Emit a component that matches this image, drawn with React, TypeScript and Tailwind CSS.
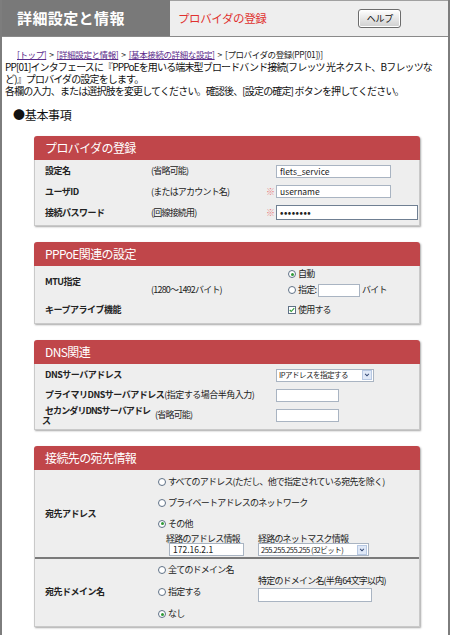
import type { ReactNode } from 'react';

const jp = "font-['Noto_Sans_CJK_JP','Noto_Sans',sans-serif]";

function Radio({ checked = false }: { checked?: boolean }) {
  return (
    <span className="inline-flex h-[8px] w-[8px] shrink-0 items-center justify-center rounded-full border border-[#5f7186] bg-white">
      {checked && <span className="h-[3px] w-[3px] rounded-full bg-[#2e9a36]" />}
    </span>
  );
}

function Check() {
  return (
    <span className="inline-flex h-[8px] w-[8px] shrink-0 items-center justify-center border border-[#5f7186] bg-white">
      <svg viewBox="0 0 8 8" className="h-[6px] w-[6px]">
        <path d="M1 4 L3 6 L7 1.5" fill="none" stroke="#2e9a36" strokeWidth="1.5" />
      </svg>
    </span>
  );
}

function Field({
  value = '',
  w,
  h = 'h-[13px]',
  strong = false,
  dots = false,
}: {
  value?: string;
  w: string;
  h?: string;
  strong?: boolean;
  dots?: boolean;
}) {
  return (
    <div
      className={`${w} ${h} flex items-center border bg-white px-[3px] leading-none text-[#222] ${
        strong ? 'border-[#6f7f92]' : 'border-[#a9b4c2]'
      } ${dots ? 'text-[9px] font-bold tracking-[0.5px]' : 'text-[8.5px]'}`}
    >
      {value}
    </div>
  );
}

function Select({ value, w }: { value: string; w: string }) {
  return (
    <div className={`${w} flex h-[13px] items-center border border-[#a9b4c2] bg-white`}>
      <span className="flex-1 whitespace-nowrap pl-[2px] text-[7.5px] leading-none tracking-[-0.5px] text-[#222]">
        {value}
      </span>
      <span className="mr-px flex h-[10px] w-[10px] shrink-0 items-center justify-center border border-[#b7c8e2] bg-[#dfe8f7]">
        <svg viewBox="0 0 8 8" className="h-[6px] w-[6px]">
          <path d="M1.5 2.5 L4 5 L6.5 2.5" fill="none" stroke="#3b4f7a" strokeWidth="1.4" />
        </svg>
      </span>
    </div>
  );
}

function Panel({ title, children }: { title: string; children: ReactNode }) {
  return (
    <div className="ml-[32px] w-[386px] rounded-t-[3px] shadow-[1px_1px_2px_rgba(0,0,0,0.35)]">
      <div className="h-[24px] rounded-t-[3px] bg-[#c0464a] pl-[11px] text-[12px] leading-[24px] tracking-[-0.6px] text-white">
        {title}
      </div>
      <div className="border-x border-b border-[#c9c9c9] bg-[#eeeeee]">{children}</div>
    </div>
  );
}

const label = 'text-[9px] font-bold tracking-[-0.5px] text-[#222]';
const small = 'text-[9px] tracking-[-0.8px] text-[#222]';
const mark = 'w-[10px] text-[9px] text-[#e77c7c]';

export default function App() {
  return (
    <div className={`${jp} h-[635px] w-[450px] overflow-hidden border-x-2 border-[#7d7d7d] bg-white`}>
      {/* ヘッダー */}
      <div className="flex h-[37px] border-b border-[#8a8a8a]">
        <div className="flex w-[168px] items-center bg-[#797979] pl-[15px] text-[15px] font-bold tracking-[0.4px] text-white">
          詳細設定と情報
        </div>
        <div className="flex flex-1 items-center border-t border-[#a0a0a0] bg-[#eeeeee] pl-[8px]">
          <span className="text-[11.5px] tracking-[-0.4px] text-[#e0312f]">プロバイダの登録</span>
          <button className="ml-[92px] flex h-[19px] w-[43px] items-center justify-center rounded-[3px] border border-[#6c6c6c] bg-gradient-to-b from-white to-[#cfcfcf] text-[9px] tracking-[-0.3px] text-[#111] shadow-[inset_0_0_0_1px_#fff]">
            ヘルプ
          </button>
        </div>
      </div>

      {/* パンくず・説明 */}
      <div className="mt-[11px] whitespace-nowrap pl-[15px] text-[8.5px] leading-[12px] tracking-[-0.4px] text-[#222]">
        <a className="text-[#5a2a8a] underline">[トップ]</a> &nbsp;&gt;&nbsp;{' '}
        <a className="text-[#5a2a8a] underline">[詳細設定と情報]</a> &nbsp;&gt;&nbsp;{' '}
        <a className="text-[#5a2a8a] underline">[基本接続の詳細な設定]</a> &nbsp;&gt;&nbsp; [プロバイダの登録(PP[01])]
      </div>
      <div className="mt-px whitespace-nowrap pl-[3px] text-[10px] leading-[12px] tracking-[-0.85px] text-[#111]">
        <div>PP[01]インタフェースに『PPPoEを用いる端末型ブロードバンド接続(フレッツ 光ネクスト、Bフレッツな</div>
        <div>ど)』プロバイダの設定をします。</div>
        <div>各欄の入力、または選択肢を変更してください。確認後、[設定の確定] ボタンを押してください。</div>
      </div>
      <div className="mt-[11px] pl-[11px] text-[12px] leading-[14px] tracking-[-0.3px] text-[#111]">●基本事項</div>

      <div className="mt-[14px] flex flex-col gap-[16px]">
        {/* プロバイダの登録 */}
        <Panel title="プロバイダの登録">
          <div className="pb-[2px] pl-[10px] pt-px">
            <div className="flex h-[20px] items-center">
              <span className={`${label} w-[106px]`}>設定名</span>
              <span className={`${small} w-[115px]`}>(省略可能)</span>
              <span className={mark} />
              <Field value="flets_service" w="w-[115px]" />
            </div>
            <div className="flex h-[21px] items-center">
              <span className={`${label} w-[106px]`}>ユーザID</span>
              <span className={`${small} w-[115px]`}>(またはアカウント名)</span>
              <span className={mark}>※</span>
              <Field value="username" w="w-[115px]" />
            </div>
            <div className="flex h-[21px] items-center">
              <span className={`${label} w-[106px]`}>接続パスワード</span>
              <span className={`${small} w-[115px]`}>(回線接続用)</span>
              <span className={mark}>※</span>
              <Field value="••••••••" w="w-[142px]" h="h-[15px]" strong dots />
            </div>
          </div>
        </Panel>

        {/* PPPoE関連の設定 */}
        <Panel title="PPPoE関連の設定">
          <div className="pb-px pl-[10px]">
            <div className="flex">
              <span className={`${label} flex w-[106px] items-center`}>MTU指定</span>
              <div className="flex w-[137px] flex-col">
                <span className="h-[16px]" />
                <span className={`${small} flex h-[16px] items-center`}>(1280～1492バイト)</span>
              </div>
              <div className="flex flex-col">
                <div className="flex h-[16px] items-center gap-[2px]">
                  <Radio checked />
                  <span className={small}>自動</span>
                </div>
                <div className="flex h-[16px] items-center gap-[2px]">
                  <Radio />
                  <span className={small}>指定:</span>
                  <Field w="w-[42px]" />
                  <span className={small}>バイト</span>
                </div>
              </div>
            </div>
            <div className="flex h-[24px] items-center">
              <span className={`${label} w-[243px]`}>キープアライブ機能</span>
              <Check />
              <span className={`${small} ml-[2px]`}>使用する</span>
            </div>
          </div>
        </Panel>

        {/* DNS関連 */}
        <Panel title="DNS関連">
          <div className="pb-[3px] pl-[10px]">
            <div className="flex h-[22px] items-center">
              <span className={`${label} w-[231px]`}>DNSサーバアドレス</span>
              <Select value="IPアドレスを指定する" w="w-[98px]" />
            </div>
            <div className="flex h-[18px] items-center">
              <span className={`${label} w-[231px]`}>
                プライマリDNSサーバアドレス<span className="font-normal">(指定する場合半角入力)</span>
              </span>
              <Field w="w-[63px]" />
            </div>
            <div className="flex h-[22px] items-center">
              <div className="flex w-[110px] flex-col text-[9px] font-bold leading-[9px] tracking-[-0.9px] text-[#222]">
                <span className="whitespace-nowrap">セカンダリDNSサーバアドレ</span>
                <span className="-ml-[3px] mt-px">ス</span>
              </div>
              <span className={`${small} w-[121px]`}>(省略可能)</span>
              <Field w="w-[63px]" />
            </div>
          </div>
        </Panel>

        {/* 接続先の宛先情報 */}
        <Panel title="接続先の宛先情報">
          <div className="flex pl-[10px] pt-px">
            <span className={`${label} flex w-[113px] items-center`}>宛先アドレス</span>
            <div className="flex flex-col pb-px">
              <div className="flex h-[21px] items-center gap-[2px]">
                <Radio />
                <span className={small}>すべてのアドレス(ただし、他で指定されている宛先を除く)</span>
              </div>
              <div className="flex h-[21px] items-center gap-[2px]">
                <Radio />
                <span className={small}>プライベートアドレスのネットワーク</span>
              </div>
              <div className="flex h-[21px] items-center gap-[2px]">
                <Radio checked />
                <span className={small}>その他</span>
              </div>
              <div className="flex">
                <div className="w-[100px] pl-[8px]">
                  <div className={`${small} leading-[9px]`}>経路のアドレス情報</div>
                  <div className="ml-[3px]">
                    <Field value="172.16.2.1" w="w-[75px]" />
                  </div>
                </div>
                <div>
                  <div className={`${small} leading-[9px]`}>経路のネットマスク情報</div>
                  <Select value="255.255.255.255 (32ビット)" w="w-[111px]" />
                </div>
              </div>
            </div>
          </div>
          <div className="h-[2px] bg-[#7a7a7a]" />
          <div className="flex pb-px pl-[10px]">
            <span className={`${label} flex w-[113px] items-center`}>宛先ドメイン名</span>
            <div className="flex w-[100px] flex-col">
              <div className="flex h-[22px] items-center gap-[2px]">
                <Radio />
                <span className={small}>全てのドメイン名</span>
              </div>
              <div className="flex h-[22px] items-center gap-[2px]">
                <Radio />
                <span className={small}>指定する</span>
              </div>
              <div className="flex h-[22px] items-center gap-[2px]">
                <Radio checked />
                <span className={small}>なし</span>
              </div>
            </div>
            <div className="pt-[17px]">
              <div className={`${small} leading-[10px]`}>特定のドメイン名(半角64文字以内)</div>
              <div className="mt-[2px]">
                <Field w="w-[114px]" h="h-[14px]" />
              </div>
            </div>
          </div>
        </Panel>
      </div>
    </div>
  );
}
